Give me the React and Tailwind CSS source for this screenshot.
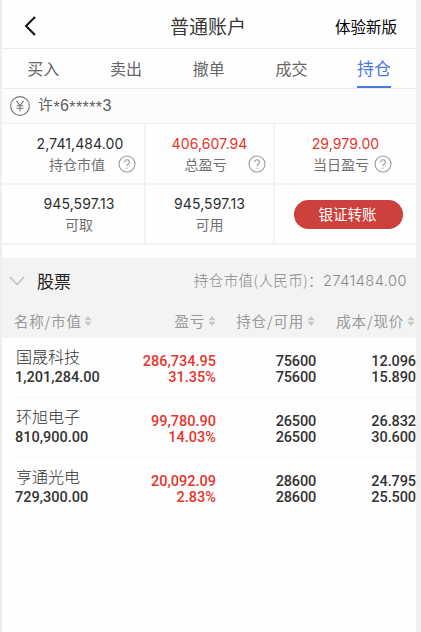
import clsx from 'clsx';

const tabs = ['买入', '卖出', '撤单', '成交', '持仓'];

const stocks = [
  { name: '国晟科技', value: '1,201,284.00', profit: '286,734.95', rate: '31.35%', hold: '75600', avail: '75600', cost: '12.096', price: '15.890' },
  { name: '环旭电子', value: '810,900.00', profit: '99,780.90', rate: '14.03%', hold: '26500', avail: '26500', cost: '26.832', price: '30.600' },
  { name: '亨通光电', value: '729,300.00', profit: '20,092.09', rate: '2.83%', hold: '28600', avail: '28600', cost: '24.795', price: '25.500' },
];

function HelpIcon() {
  return (
    <svg className="h-[18px] w-[18px] shrink-0" viewBox="0 0 18 18" fill="none" stroke="#9a9a9a" strokeWidth="1.1">
      <circle cx="9" cy="9" r="8" />
      <path d="M6.6 7.2a2.4 2.4 0 1 1 3.7 2c-.9.6-1.3 1-1.3 1.9" />
      <path d="M9 12.5v1.3" />
    </svg>
  );
}

function SortIcon() {
  return (
    <svg className="h-[10px] w-[8px] shrink-0" viewBox="0 0 8 10" fill="#c6c6c6">
      <path d="M4 0l3.6 4.2H.4z" />
      <path d="M4 10L.4 5.8h7.2z" />
    </svg>
  );
}

function Stat({ value, label, red, help, className, helpClass }) {
  return (
    <div className={clsx('flex flex-col items-center', className)}>
      <div className={clsx("h-5 font-['Inter'] text-[14px] leading-5 tracking-[0.1px]", red ? 'text-[#e5352c]' : 'text-[#2e2e2e]')}>{value}</div>
      <div className="flex h-5 items-center text-[14px] leading-5 text-[#707070]">
        <span>{label}</span>
        {help && <span className={helpClass}><HelpIcon /></span>}
      </div>
    </div>
  );
}

function HeadCell({ label, className }) {
  return (
    <div className={clsx('flex items-center', className)}>
      <span>{label}</span>
      <SortIcon />
    </div>
  );
}

function StockRow({ stock }) {
  return (
    <div className="ml-[13px] h-[60px] border-b border-[#f6f6f6] last:border-0">
      <div className="flex font-['Roboto'] text-[14.5px] leading-4 font-medium text-[#333]">
        <div className="w-[105px] pt-[9px] pl-px">
          <div className="h-[23px] font-['Noto_Sans_CJK_SC'] text-[16px] leading-[19px] font-light">{stock.name}</div>
          <div className="-ml-px">{stock.value}</div>
        </div>
        <div className="w-[96px] pt-[16px] text-right text-[#e5352c]">
          <div>{stock.profit}</div>
          <div>{stock.rate}</div>
        </div>
        <div className="w-[100px] pt-[16px] text-right tracking-[-0.2px]">
          <div>{stock.hold}</div>
          <div>{stock.avail}</div>
        </div>
        <div className="w-[100px] pt-[16px] text-right tracking-[-0.1px]">
          <div>{stock.cost}</div>
          <div>{stock.price}</div>
        </div>
      </div>
    </div>
  );
}

export default function App() {
  return (
    <div className="h-[632px] w-[421px] overflow-hidden bg-[#efefef] pr-[5px] pl-[2px] font-['Noto_Sans_CJK_SC',sans-serif] whitespace-nowrap">
      <div className="h-full bg-[#fefefe]">
        <header className="flex h-[49px] items-center border-b border-[#ebebeb] pt-[3px]">
          <svg className="ml-[22px] h-5 w-[13px]" viewBox="0 0 13 20" fill="none" stroke="#111" strokeWidth="2">
            <path d="M11 1L2 10l9 9" />
          </svg>
          <h1 className="ml-[133px] text-[19px] leading-6 text-[#383838]">普通账户</h1>
          <span className="ml-[89px] text-[15.5px] leading-6 text-black">体验新版</span>
        </header>

        <nav className="flex h-10 border-b border-[#ebebeb]">
          {tabs.map((tab, i) => (
            <div key={tab} className="flex w-[82.7px] shrink-0 justify-center">
              <span className={clsx('h-[39px] leading-[38px]', i === 4 ? 'border-b-2 border-[#4a7ae0] text-[17px] text-[#4a7ae0]' : 'text-[16px] text-[#666]')}>{tab}</span>
            </div>
          ))}
        </nav>

        <div className="flex h-[35px] items-center border-b border-[#f1f1f1] bg-[#fcfcfc] pl-2">
          <svg className="h-5 w-5" viewBox="0 0 20 20" fill="none" stroke="#777" strokeWidth="1.1">
            <circle cx="10" cy="10" r="9.4" />
            <path d="M6.4 4.8L10 9.6l3.6-4.8M10 9.6V15.4M6.6 9.8h6.8M6.6 12.3h6.8" />
          </svg>
          <span className="ml-[8px] flex pt-px font-['Liberation_Sans','Noto_Sans_CJK_SC'] text-[16px] tracking-[0.4px] text-[#606060]">
            <span className="text-[15px]">许</span><span className="pt-[2px]">*</span>6<span className="pt-[2px]">*****</span>3
          </span>
        </div>

        <section className="grid grid-cols-[144px_129px_141px] grid-rows-[61px_60px]">
          <Stat className="border-r-2 border-b-2 border-[#f3f3f3] pt-[10px] pl-[14px]" value="2,741,484.00" label="持仓市值" help helpClass="ml-[13px] -mr-[8px] w-[1px]" />
          <Stat className="border-r-2 border-b-2 border-[#f3f3f3] pt-[10px]" value="406,607.94" label="总盈亏" red help helpClass="ml-[21px] -mr-[14px] w-[1px]" />
          <Stat className="border-b-2 border-[#f3f3f3] pt-[10px]" value="29,979.00" label="当日盈亏" red help helpClass="ml-[5px] mr-[3px] w-[1px]" />
          <Stat className="border-r-2 border-b-2 border-[#f3f3f3] pt-[9px] pl-[12px]" value="945,597.13" label="可取" />
          <Stat className="border-r-2 border-b-2 border-[#f3f3f3] pt-[9px]" value="945,597.13" label="可用" />
          <div className="flex items-center justify-center border-b-2 border-[#f3f3f3] pl-[6px]">
            <button className="h-[29px] w-[109px] rounded-full bg-[#cc413c] pr-[2px] text-[14.5px] leading-[28px] text-white">银证转账</button>
          </div>
        </section>

        <section className="mt-[13px] h-20 bg-[#f3f3f3]">
          <div className="flex h-[45px] items-center">
            <svg className="ml-[7px] h-[10px] w-4" viewBox="0 0 16 10" fill="none" stroke="#c4c4c4" strokeWidth="1.8">
              <path d="M1 1l7 7.5L15 1" />
            </svg>
            <span className="ml-[12px] text-[17px] text-[#222]">股票</span>
            <span className="mr-[9px] ml-auto text-[14.5px] font-light tracking-[0.4px] text-[#888]">
              持仓市值(人民币)：<span className="font-['Inter'] tracking-[0.5px]">2741484.00</span>
            </span>
          </div>
          <div className="flex h-[35px] text-[14.5px] tracking-[0.8px] text-[#999]">
            <HeadCell label="名称/市值" className="w-[98px] gap-[2px] pl-3" />
            <HeadCell label="盈亏" className="w-[116px] justify-end gap-[3px]" />
            <HeadCell label="持仓/可用" className="w-[99px] justify-end gap-[3px]" />
            <HeadCell label="成本/现价" className="w-[100px] justify-end gap-[3px] pl-px" />
          </div>
        </section>

        <section>
          {stocks.map((stock) => <StockRow key={stock.name} stock={stock} />)}
        </section>
      </div>
    </div>
  );
}
